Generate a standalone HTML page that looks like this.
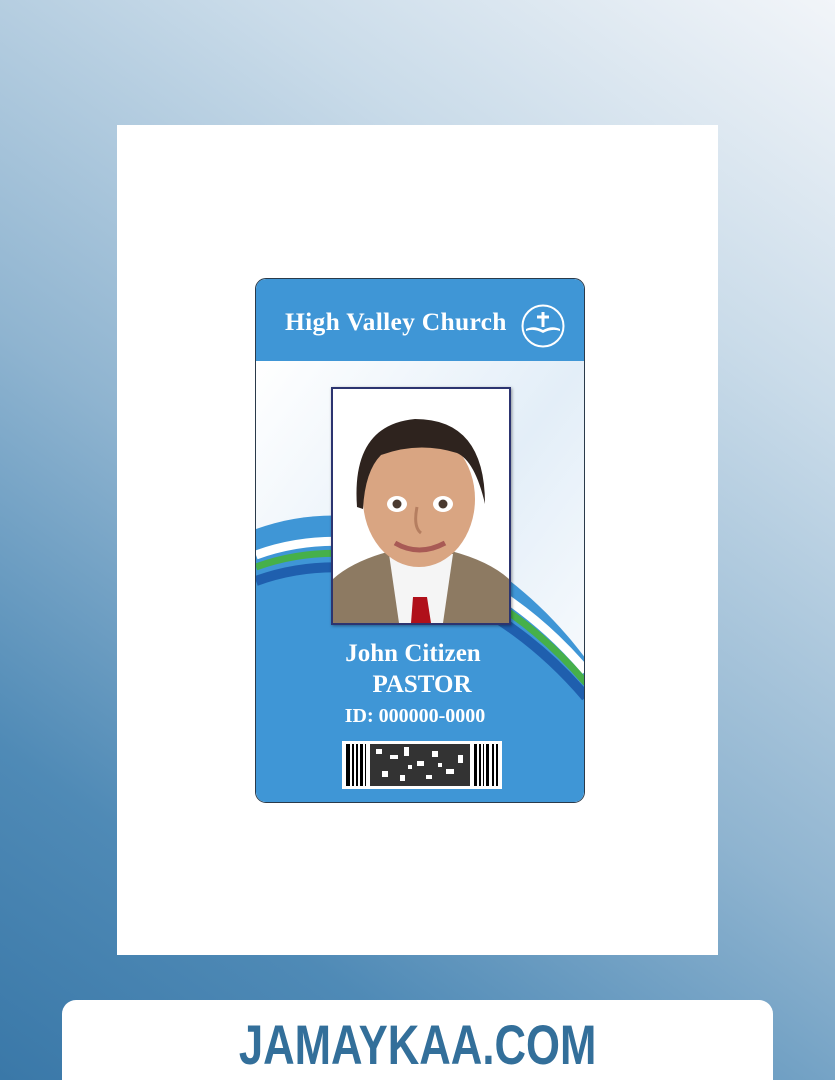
<!DOCTYPE html>
<html><head><meta charset="utf-8"><style>
html,body{margin:0;padding:0;width:835px;height:1080px;overflow:hidden}
body{position:relative;font-family:"Liberation Serif",serif;
background:linear-gradient(215deg,#f2f5f9 0%,#c9dbe9 25%,#8fb4d0 55%,#4f8ab6 80%,#3a78a8 100%);}
.paper{position:absolute;left:117px;top:125px;width:601px;height:830px;background:#fff}
.card{position:absolute;left:255px;top:278px;width:328px;height:523px;border:1px solid #2a3a4a;border-radius:11px;overflow:hidden;background:#fff}
.hdr{position:absolute;left:0;top:0;width:100%;height:82px;background:#3f96d6}
.hdr .t{position:absolute;left:29px;top:28px;color:#fff;font-weight:bold;font-size:25.5px;letter-spacing:0.3px}
.photo{position:absolute;left:75px;top:108px;width:176px;height:234px;border:2px solid #2c3470;background:#fff;overflow:hidden;box-shadow:1px 1px 3px rgba(0,0,0,.4)}
.txt{position:absolute;width:100%;text-align:center;color:#fff;font-weight:bold}
.foot{position:absolute;left:62px;top:1000px;width:711px;height:80px;background:#fff;border-radius:14px 14px 0 0}
.foot span{position:absolute;left:0;width:100%;top:12px;text-align:center;font-family:"Liberation Sans",sans-serif;font-weight:bold;font-size:56px;color:#336f9a;transform:scaleX(0.78);transform-origin:356px 0}
</style></head><body>
<div class="paper"></div>
<div class="card">
<svg width="328" height="523" style="position:absolute;left:0;top:0">
<defs><linearGradient id="w" x1="0" y1="0" x2="1" y2="1"><stop offset="0" stop-color="#fff"/><stop offset="0.5" stop-color="#e3eef8"/><stop offset="1" stop-color="#fff"/></linearGradient></defs>
<rect x="0" y="82" width="328" height="441" fill="url(#w)"/>
<path d="M0,250 C110,210 240,260 330,380 L330,523 L0,523Z" fill="#3f96d6"/>
<path d="M0,276 C110,236 240,286 330,392" stroke="#fff" stroke-width="9" fill="none"/>
<path d="M0,288 C110,248 240,298 330,404" stroke="#46b04a" stroke-width="7" fill="none"/>
<path d="M0,302 C110,262 240,312 330,418" stroke="#1f5fae" stroke-width="10" fill="none"/>
</svg>
<div class="hdr"><div class="t">High Valley Church</div>
<svg width="46" height="46" style="position:absolute;left:264px;top:24px" viewBox="0 0 46 46">
<circle cx="23" cy="23" r="20.5" stroke="#fff" stroke-width="2" fill="none"/>
<path d="M23,9 V24 M17,14 H29" stroke="#fff" stroke-width="3"/>
<path d="M6,26 Q14,22 23,27 Q32,22 40,26 L40,28 Q32,25 23,30 Q14,25 6,28Z" fill="#fff"/>
</svg></div>
<div class="photo"><svg width="176" height="234" viewBox="0 0 176 234">
<path d="M0,190 Q20,172 58,162 L118,162 Q156,172 176,190 L176,234 L0,234Z" fill="#8d7a62"/>
<path d="M56,165 L120,165 L110,234 L66,234Z" fill="#f5f5f5"/>
<path d="M80,208 L94,208 L98,234 L78,234Z" fill="#b0101a"/>
<ellipse cx="86" cy="110" rx="56" ry="68" fill="#d9a582"/>
<path d="M24,118 Q18,36 82,30 Q152,30 152,115 Q142,72 124,64 Q86,52 48,66 Q32,82 30,120Z" fill="#2e231e"/>
<ellipse cx="64" cy="115" rx="10" ry="8" fill="#fff"/><circle cx="64" cy="115" r="4.5" fill="#4a3a30"/>
<ellipse cx="110" cy="115" rx="10" ry="8" fill="#fff"/><circle cx="110" cy="115" r="4.5" fill="#4a3a30"/>
<path d="M84,118 Q80,138 88,144" stroke="#b57e60" stroke-width="3" fill="none"/>
<path d="M62,154 Q86,168 112,154" stroke="#a85a55" stroke-width="5" fill="none"/>
</svg></div>
<div class="txt" style="top:361px;font-size:25px;left:-7px">John Citizen</div>
<div class="txt" style="top:392px;font-size:25px;left:2px">PASTOR</div>
<div class="txt" style="top:426px;font-size:20px;left:-5px">ID: 000000-0000</div>
<svg width="160" height="48" style="position:absolute;left:86px;top:462px">
<rect width="160" height="48" fill="#fff"/>
<g fill="#000">
<rect x="4" y="3" width="4" height="42"/><rect x="10" y="3" width="2" height="42"/><rect x="14" y="3" width="2" height="42"/><rect x="18" y="3" width="3" height="42"/><rect x="23" y="3" width="1" height="42"/>
<rect x="28" y="3" width="100" height="42" fill="#333"/>
<rect x="132" y="3" width="3" height="42"/><rect x="137" y="3" width="2" height="42"/><rect x="141" y="3" width="1" height="42"/><rect x="144" y="3" width="3" height="42"/><rect x="150" y="3" width="2" height="42"/><rect x="154" y="3" width="2" height="42"/>
</g>
<g fill="#fff"><rect x="34" y="8" width="6" height="5"/><rect x="48" y="14" width="8" height="4"/><rect x="62" y="6" width="5" height="9"/><rect x="75" y="20" width="7" height="5"/><rect x="90" y="10" width="6" height="6"/><rect x="104" y="28" width="8" height="5"/><rect x="40" y="30" width="6" height="6"/><rect x="58" y="34" width="5" height="6"/><rect x="84" y="34" width="6" height="4"/><rect x="116" y="14" width="5" height="8"/><rect x="96" y="22" width="4" height="4"/><rect x="66" y="24" width="4" height="4"/></g>
</svg>
</div>
<div class="foot"><span>JAMAYKAA.COM</span></div>
</body></html>
